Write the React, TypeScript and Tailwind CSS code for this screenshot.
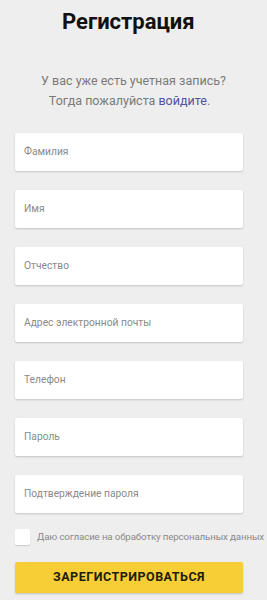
import React from "react";

const fields = [
  "Фамилия",
  "Имя",
  "Отчество",
  "Адрес электронной почты",
  "Телефон",
  "Пароль",
  "Подтверждение пароля",
];

export default function App() {
  return (
    <div
      className="w-[267px] h-[600px] bg-[#eeeeee] overflow-hidden"
      style={{ fontFamily: "Roboto, 'Noto Sans', sans-serif" }}
    >
      <div className="pt-[9px] pl-[62px]">
        <h1 className="text-[22px] leading-[25px] font-bold text-[#111]">Регистрация</h1>
      </div>
      <div className="mt-[37px] text-[12.5px] leading-[20px] text-[#7a7a7a] whitespace-nowrap text-center pr-[2px]">
        <div className="pl-[2px]">У вас уже есть учетная запись?</div>
        <div className="pr-[6px]">
          Тогда пожалуйста <span className="text-[#5252a0]">войдите</span>.
        </div>
      </div>
      <div className="mt-[22px] ml-[15px] w-[228px] flex flex-col gap-[19px]">
        {fields.map((f) => (
          <div
            key={f}
            className="h-[38px] bg-white rounded-[2px] shadow-[0_1px_2px_rgba(0,0,0,0.18)] flex items-center pl-[9px] text-[10.25px] text-[#8a8a8a]"
          >
            {f}
          </div>
        ))}
      </div>
      <div className="mt-[16px] ml-[15px] flex items-center gap-[7px]">
        <div className="shrink-0 w-[15px] h-[16px] bg-white rounded-[2px] shadow-[0_1px_1px_rgba(0,0,0,0.15)]" />
        <span className="text-[9.75px] tracking-[-0.15px] text-[#8a8a8a] whitespace-nowrap">
          Даю согласие на обработку персональных данных
        </span>
      </div>
      <div className="mt-[17px] ml-[15px] w-[228px] h-[31px] bg-[#f8ce36] rounded-[2px] shadow-[0_1px_2px_rgba(0,0,0,0.2)] flex items-center justify-center text-[12.5px] font-bold tracking-[0.5px] text-[#221c0c]">
        ЗАРЕГИСТРИРОВАТЬСЯ
      </div>
    </div>
  );
}
